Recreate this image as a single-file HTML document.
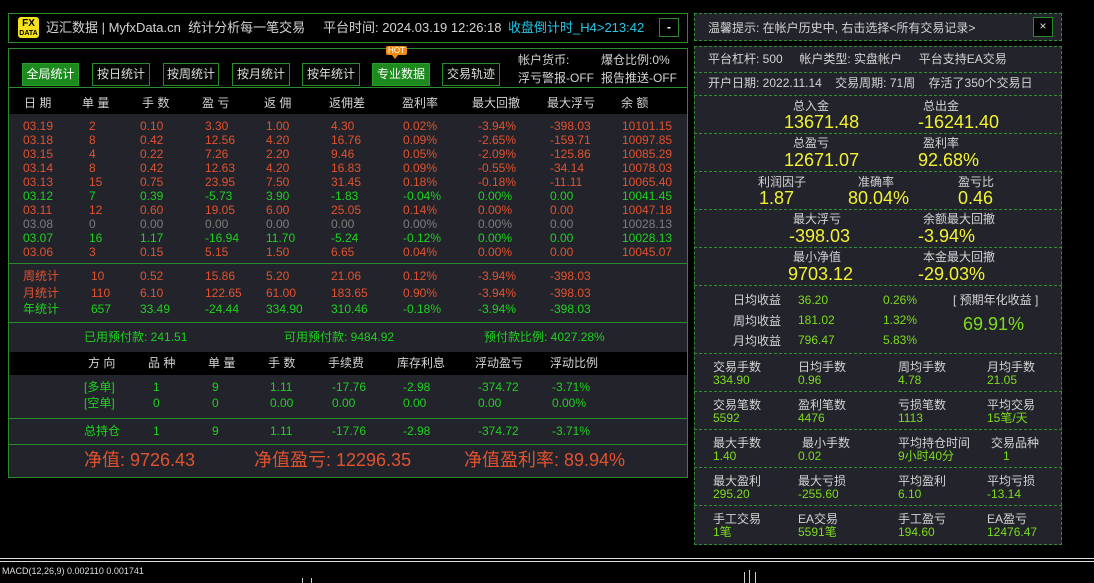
<!DOCTYPE html>
<html><head><meta charset="utf-8"><style>
*{margin:0;padding:0;box-sizing:border-box}
body{width:1094px;height:583px;background:#000;position:relative;overflow:hidden;font-family:"Liberation Sans","Noto Sans CJK SC",sans-serif;font-size:12px;color:#ccc}
.t{position:absolute;white-space:nowrap;line-height:16px}
.b{position:absolute}
.r{color:#e2522e}.g{color:#1fd21f}.gy{color:#7d7d7d}.y{color:#f2f232}.l{color:#7ddc1c}.w{color:#d4d4d4}
.btn{position:absolute;top:63px;height:23px;border:1px solid #2c8a2c;color:#ddd;font-size:12px;line-height:21px;text-align:center;background:#050805}
.btn.on{background:#1d8a1d;color:#fff;border-color:#2aa02a}
.hl{position:absolute;left:8px;width:680px;height:1px;background:#2c8a2c}
.dl{position:absolute;left:694px;width:368px;border-top:1px dashed #2f8f2f}
.big{font-size:18px;line-height:20px}
</style></head><body>
<div class="b" style="left:8px;top:13px;width:680px;height:30px;border:1px solid #2c8a2c;background:#000"></div>
<div class="b" style="left:18px;top:17px;width:21px;height:21px;background:#f5e21a;border-radius:3px;color:#000;font-weight:bold;text-align:center;font-size:10px;line-height:9px;padding-top:2px">FX<br><span style="font-size:7px">DATA</span></div>
<div class="t w" style="left:46px;top:20px;font-size:13px">迈汇数据 | MyfxData.cn&nbsp; 统计分析每一笔交易</div>
<div class="t w" style="left:323px;top:20px;font-size:13px">平台时间: 2024.03.19 12:26:18</div>
<div class="t" style="left:508px;top:20px;font-size:13px;color:#22c8e8">收盘倒计时_H4&gt;213:42</div>
<div class="b" style="left:659px;top:18px;width:20px;height:19px;border:1px solid #2c8a2c;color:#fff;text-align:center;line-height:16px;font-weight:bold">-</div>

<div class="b" style="left:8px;top:48px;width:680px;height:430px;border:1px solid #2c8a2c;background:#000"></div>
<div class="b" style="left:9px;top:93px;width:678px;height:21px;background:#000"></div>
<div class="b" style="left:9px;top:114px;width:678px;height:238px;background:#22232b"></div>
<div class="b" style="left:9px;top:375px;width:678px;height:102px;background:#22232b"></div>
<div class="hl" style="top:87px"></div>
<div class="hl" style="top:263px"></div>
<div class="hl" style="top:322px"></div>
<div class="hl" style="top:418px"></div>
<div class="hl" style="top:444px"></div>

<div class="btn on" style="left:22px;width:57px">全局统计</div>
<div class="btn" style="left:92px;width:58px">按日统计</div>
<div class="btn" style="left:163px;width:56px">按周统计</div>
<div class="btn" style="left:232px;width:58px">按月统计</div>
<div class="btn" style="left:302px;width:58px">按年统计</div>
<div class="btn on" style="left:372px;width:58px">专业数据</div>
<div class="btn" style="left:442px;width:58px">交易轨迹</div>
<div class="b" style="left:386px;top:46px;width:21px;height:9px;background:#f08a10;color:#fff;font-size:8px;line-height:9px;text-align:center;border-radius:2px">HOT</div>
<div class="b" style="left:392px;top:55px;width:0;height:0;border-left:3px solid transparent;border-right:3px solid transparent;border-top:4px solid #f08a10"></div>
<div class="t w" style="left:518px;top:52px">帐户货币:</div>
<div class="t w" style="left:601px;top:52px">爆仓比例:0%</div>
<div class="t w" style="left:518px;top:70px">浮亏警报-OFF</div>
<div class="t w" style="left:601px;top:70px">报告推送-OFF</div>

<div class="t w" style="left:24px;top:95px">日 期</div><div class="t w" style="left:82px;top:95px">单 量</div><div class="t w" style="left:142px;top:95px">手 数</div><div class="t w" style="left:202px;top:95px">盈 亏</div><div class="t w" style="left:264px;top:95px">返 佣</div><div class="t w" style="left:329px;top:95px">返佣差</div><div class="t w" style="left:402px;top:95px">盈利率</div><div class="t w" style="left:472px;top:95px">最大回撤</div><div class="t w" style="left:547px;top:95px">最大浮亏</div><div class="t w" style="left:621px;top:95px">余 额</div>

<div class="t r" style="left:23px;top:118px">03.19</div><div class="t r" style="left:89px;top:118px">2</div><div class="t r" style="left:140px;top:118px">0.10</div><div class="t r" style="left:205px;top:118px">3.30</div><div class="t r" style="left:266px;top:118px">1.00</div><div class="t r" style="left:331px;top:118px">4.30</div><div class="t r" style="left:403px;top:118px">0.02%</div><div class="t r" style="left:478px;top:118px">-3.94%</div><div class="t r" style="left:550px;top:118px">-398.03</div><div class="t r" style="left:622px;top:118px">10101.15</div>
<div class="t r" style="left:23px;top:132px">03.18</div><div class="t r" style="left:89px;top:132px">8</div><div class="t r" style="left:140px;top:132px">0.42</div><div class="t r" style="left:205px;top:132px">12.56</div><div class="t r" style="left:266px;top:132px">4.20</div><div class="t r" style="left:331px;top:132px">16.76</div><div class="t r" style="left:403px;top:132px">0.09%</div><div class="t r" style="left:478px;top:132px">-2.65%</div><div class="t r" style="left:550px;top:132px">-159.71</div><div class="t r" style="left:622px;top:132px">10097.85</div>
<div class="t r" style="left:23px;top:146px">03.15</div><div class="t r" style="left:89px;top:146px">4</div><div class="t r" style="left:140px;top:146px">0.22</div><div class="t r" style="left:205px;top:146px">7.26</div><div class="t r" style="left:266px;top:146px">2.20</div><div class="t r" style="left:331px;top:146px">9.46</div><div class="t r" style="left:403px;top:146px">0.05%</div><div class="t r" style="left:478px;top:146px">-2.09%</div><div class="t r" style="left:550px;top:146px">-125.86</div><div class="t r" style="left:622px;top:146px">10085.29</div>
<div class="t r" style="left:23px;top:160px">03.14</div><div class="t r" style="left:89px;top:160px">8</div><div class="t r" style="left:140px;top:160px">0.42</div><div class="t r" style="left:205px;top:160px">12.63</div><div class="t r" style="left:266px;top:160px">4.20</div><div class="t r" style="left:331px;top:160px">16.83</div><div class="t r" style="left:403px;top:160px">0.09%</div><div class="t r" style="left:478px;top:160px">-0.55%</div><div class="t r" style="left:550px;top:160px">-34.14</div><div class="t r" style="left:622px;top:160px">10078.03</div>
<div class="t r" style="left:23px;top:174px">03.13</div><div class="t r" style="left:89px;top:174px">15</div><div class="t r" style="left:140px;top:174px">0.75</div><div class="t r" style="left:205px;top:174px">23.95</div><div class="t r" style="left:266px;top:174px">7.50</div><div class="t r" style="left:331px;top:174px">31.45</div><div class="t r" style="left:403px;top:174px">0.18%</div><div class="t r" style="left:478px;top:174px">-0.18%</div><div class="t r" style="left:550px;top:174px">-11.11</div><div class="t r" style="left:622px;top:174px">10065.40</div>
<div class="t g" style="left:23px;top:188px">03.12</div><div class="t g" style="left:89px;top:188px">7</div><div class="t g" style="left:140px;top:188px">0.39</div><div class="t g" style="left:205px;top:188px">-5.73</div><div class="t g" style="left:266px;top:188px">3.90</div><div class="t g" style="left:331px;top:188px">-1.83</div><div class="t g" style="left:403px;top:188px">-0.04%</div><div class="t g" style="left:478px;top:188px">0.00%</div><div class="t g" style="left:550px;top:188px">0.00</div><div class="t g" style="left:622px;top:188px">10041.45</div>
<div class="t r" style="left:23px;top:202px">03.11</div><div class="t r" style="left:89px;top:202px">12</div><div class="t r" style="left:140px;top:202px">0.60</div><div class="t r" style="left:205px;top:202px">19.05</div><div class="t r" style="left:266px;top:202px">6.00</div><div class="t r" style="left:331px;top:202px">25.05</div><div class="t r" style="left:403px;top:202px">0.14%</div><div class="t r" style="left:478px;top:202px">0.00%</div><div class="t r" style="left:550px;top:202px">0.00</div><div class="t r" style="left:622px;top:202px">10047.18</div>
<div class="t gy" style="left:23px;top:216px">03.08</div><div class="t gy" style="left:89px;top:216px">0</div><div class="t gy" style="left:140px;top:216px">0.00</div><div class="t gy" style="left:205px;top:216px">0.00</div><div class="t gy" style="left:266px;top:216px">0.00</div><div class="t gy" style="left:331px;top:216px">0.00</div><div class="t gy" style="left:403px;top:216px">0.00%</div><div class="t gy" style="left:478px;top:216px">0.00%</div><div class="t gy" style="left:550px;top:216px">0.00</div><div class="t gy" style="left:622px;top:216px">10028.13</div>
<div class="t g" style="left:23px;top:230px">03.07</div><div class="t g" style="left:89px;top:230px">16</div><div class="t g" style="left:140px;top:230px">1.17</div><div class="t g" style="left:205px;top:230px">-16.94</div><div class="t g" style="left:266px;top:230px">11.70</div><div class="t g" style="left:331px;top:230px">-5.24</div><div class="t g" style="left:403px;top:230px">-0.12%</div><div class="t g" style="left:478px;top:230px">0.00%</div><div class="t g" style="left:550px;top:230px">0.00</div><div class="t g" style="left:622px;top:230px">10028.13</div>
<div class="t r" style="left:23px;top:244px">03.06</div><div class="t r" style="left:89px;top:244px">3</div><div class="t r" style="left:140px;top:244px">0.15</div><div class="t r" style="left:205px;top:244px">5.15</div><div class="t r" style="left:266px;top:244px">1.50</div><div class="t r" style="left:331px;top:244px">6.65</div><div class="t r" style="left:403px;top:244px">0.04%</div><div class="t r" style="left:478px;top:244px">0.00%</div><div class="t r" style="left:550px;top:244px">0.00</div><div class="t r" style="left:622px;top:244px">10045.07</div>

<div class="t r" style="left:23px;top:268px">周统计</div><div class="t r" style="left:91px;top:268px">10</div><div class="t r" style="left:140px;top:268px">0.52</div><div class="t r" style="left:205px;top:268px">15.86</div><div class="t r" style="left:266px;top:268px">5.20</div><div class="t r" style="left:331px;top:268px">21.06</div><div class="t r" style="left:403px;top:268px">0.12%</div><div class="t r" style="left:478px;top:268px">-3.94%</div><div class="t r" style="left:550px;top:268px">-398.03</div>
<div class="t r" style="left:23px;top:285px">月统计</div><div class="t r" style="left:91px;top:285px">110</div><div class="t r" style="left:140px;top:285px">6.10</div><div class="t r" style="left:205px;top:285px">122.65</div><div class="t r" style="left:266px;top:285px">61.00</div><div class="t r" style="left:331px;top:285px">183.65</div><div class="t r" style="left:403px;top:285px">0.90%</div><div class="t r" style="left:478px;top:285px">-3.94%</div><div class="t r" style="left:550px;top:285px">-398.03</div>
<div class="t g" style="left:23px;top:301px">年统计</div><div class="t g" style="left:91px;top:301px">657</div><div class="t g" style="left:140px;top:301px">33.49</div><div class="t g" style="left:205px;top:301px">-24.44</div><div class="t g" style="left:266px;top:301px">334.90</div><div class="t g" style="left:331px;top:301px">310.46</div><div class="t g" style="left:403px;top:301px">-0.18%</div><div class="t g" style="left:478px;top:301px">-3.94%</div><div class="t g" style="left:550px;top:301px">-398.03</div>

<div class="t g" style="left:84px;top:329px">已用预付款: 241.51</div>
<div class="t g" style="left:284px;top:329px">可用预付款: 9484.92</div>
<div class="t g" style="left:484px;top:329px">预付款比例: 4027.28%</div>

<div class="t w" style="left:88px;top:355px">方 向</div><div class="t w" style="left:148px;top:355px">品 种</div><div class="t w" style="left:208px;top:355px">单 量</div><div class="t w" style="left:268px;top:355px">手 数</div><div class="t w" style="left:328px;top:355px">手续费</div><div class="t w" style="left:397px;top:355px">库存利息</div><div class="t w" style="left:475px;top:355px">浮动盈亏</div><div class="t w" style="left:550px;top:355px">浮动比例</div>

<div class="t g" style="left:84px;top:379px">[多单]</div><div class="t g" style="left:153px;top:379px">1</div><div class="t g" style="left:212px;top:379px">9</div><div class="t g" style="left:270px;top:379px">1.11</div><div class="t g" style="left:332px;top:379px">-17.76</div><div class="t g" style="left:403px;top:379px">-2.98</div><div class="t g" style="left:478px;top:379px">-374.72</div><div class="t g" style="left:552px;top:379px">-3.71%</div>
<div class="t g" style="left:84px;top:395px">[空单]</div><div class="t g" style="left:153px;top:395px">0</div><div class="t g" style="left:212px;top:395px">0</div><div class="t g" style="left:270px;top:395px">0.00</div><div class="t g" style="left:332px;top:395px">0.00</div><div class="t g" style="left:403px;top:395px">0.00</div><div class="t g" style="left:478px;top:395px">0.00</div><div class="t g" style="left:552px;top:395px">0.00%</div>
<div class="t g" style="left:84px;top:423px">总持仓</div><div class="t g" style="left:153px;top:423px">1</div><div class="t g" style="left:212px;top:423px">9</div><div class="t g" style="left:270px;top:423px">1.11</div><div class="t g" style="left:332px;top:423px">-17.76</div><div class="t g" style="left:403px;top:423px">-2.98</div><div class="t g" style="left:478px;top:423px">-374.72</div><div class="t g" style="left:552px;top:423px">-3.71%</div>

<div class="t r" style="left:84px;top:449px;font-size:18px;line-height:22px">净值: 9726.43</div>
<div class="t r" style="left:254px;top:449px;font-size:18px;line-height:22px">净值盈亏: 12296.35</div>
<div class="t r" style="left:464px;top:449px;font-size:18px;line-height:22px">净值盈利率: 89.94%</div>

<div class="b" style="left:694px;top:13px;width:368px;height:28px;border:1px dashed #2f8f2f;background:#22232b"></div>
<div class="t w" style="left:708px;top:20px">温馨提示: 在帐户历史中, 右击选择&lt;所有交易记录&gt;</div>
<div class="b" style="left:1033px;top:17px;width:20px;height:20px;border:1px solid #2c8a2c;background:#000;color:#ddd;text-align:center;line-height:17px;font-size:12px">×</div>
<div class="b" style="left:694px;top:46px;width:368px;height:499px;border:1px dashed #2f8f2f;background:#22232b"></div>
<div class="dl" style="top:72px"></div><div class="dl" style="top:95px"></div><div class="dl" style="top:133px"></div><div class="dl" style="top:171px"></div><div class="dl" style="top:209px"></div><div class="dl" style="top:247px"></div><div class="dl" style="top:285px"></div><div class="dl" style="top:353px"></div><div class="dl" style="top:391px"></div><div class="dl" style="top:429px"></div><div class="dl" style="top:467px"></div><div class="dl" style="top:505px"></div>

<div class="t w" style="left:708px;top:51px">平台杠杆: 500&nbsp;&nbsp;&nbsp;&nbsp; 帐户类型: 实盘帐户&nbsp;&nbsp;&nbsp;&nbsp; 平台支持EA交易</div>
<div class="t w" style="left:708px;top:75px">开户日期: 2022.11.14&nbsp;&nbsp;&nbsp; 交易周期: 71周&nbsp;&nbsp;&nbsp; 存活了350个交易日</div>

<div class="t w" style="left:793px;top:98px">总入金</div><div class="t w" style="left:923px;top:98px">总出金</div>
<div class="t y big" style="left:784px;top:112px">13671.48</div><div class="t y big" style="left:918px;top:112px">-16241.40</div>
<div class="t w" style="left:793px;top:135px">总盈亏</div><div class="t w" style="left:923px;top:135px">盈利率</div>
<div class="t y big" style="left:784px;top:150px">12671.07</div><div class="t y big" style="left:918px;top:150px">92.68%</div>
<div class="t w" style="left:758px;top:174px">利润因子</div><div class="t w" style="left:858px;top:174px">准确率</div><div class="t w" style="left:958px;top:174px">盈亏比</div>
<div class="t y big" style="left:759px;top:188px">1.87</div><div class="t y big" style="left:848px;top:188px">80.04%</div><div class="t y big" style="left:958px;top:188px">0.46</div>
<div class="t w" style="left:793px;top:211px">最大浮亏</div><div class="t w" style="left:923px;top:211px">余额最大回撤</div>
<div class="t y big" style="left:789px;top:226px">-398.03</div><div class="t y big" style="left:918px;top:226px">-3.94%</div>
<div class="t w" style="left:793px;top:249px">最小净值</div><div class="t w" style="left:923px;top:249px">本金最大回撤</div>
<div class="t y big" style="left:788px;top:264px">9703.12</div><div class="t y big" style="left:918px;top:264px">-29.03%</div>

<div class="t w" style="left:733px;top:292px">日均收益</div><div class="t l" style="left:798px;top:292px">36.20</div><div class="t l" style="left:883px;top:292px">0.26%</div>
<div class="t w" style="left:733px;top:313px">周均收益</div><div class="t l" style="left:798px;top:312px">181.02</div><div class="t l" style="left:883px;top:312px">1.32%</div>
<div class="t w" style="left:733px;top:333px">月均收益</div><div class="t l" style="left:798px;top:332px">796.47</div><div class="t l" style="left:883px;top:332px">5.83%</div>
<div class="t w" style="left:953px;top:292px">[ 预期年化收益 ]</div>
<div class="t l big" style="left:963px;top:314px">69.91%</div>

<div class="t w" style="left:713px;top:359px">交易手数</div><div class="t w" style="left:798px;top:359px">日均手数</div><div class="t w" style="left:898px;top:359px">周均手数</div><div class="t w" style="left:987px;top:359px">月均手数</div>
<div class="t l" style="left:713px;top:372px">334.90</div><div class="t l" style="left:798px;top:372px">0.96</div><div class="t l" style="left:898px;top:372px">4.78</div><div class="t l" style="left:987px;top:372px">21.05</div>
<div class="t w" style="left:713px;top:397px">交易笔数</div><div class="t w" style="left:798px;top:397px">盈利笔数</div><div class="t w" style="left:898px;top:397px">亏损笔数</div><div class="t w" style="left:987px;top:397px">平均交易</div>
<div class="t l" style="left:713px;top:410px">5592</div><div class="t l" style="left:798px;top:410px">4476</div><div class="t l" style="left:898px;top:410px">1113</div><div class="t l" style="left:987px;top:410px">15笔/天</div>
<div class="t w" style="left:713px;top:435px">最大手数</div><div class="t w" style="left:802px;top:435px">最小手数</div><div class="t w" style="left:898px;top:435px">平均持仓时间</div><div class="t w" style="left:991px;top:435px">交易品种</div>
<div class="t l" style="left:713px;top:448px">1.40</div><div class="t l" style="left:798px;top:448px">0.02</div><div class="t l" style="left:898px;top:448px">9小时40分</div><div class="t l" style="left:1003px;top:448px">1</div>
<div class="t w" style="left:713px;top:473px">最大盈利</div><div class="t w" style="left:798px;top:473px">最大亏损</div><div class="t w" style="left:898px;top:473px">平均盈利</div><div class="t w" style="left:987px;top:473px">平均亏损</div>
<div class="t l" style="left:713px;top:486px">295.20</div><div class="t l" style="left:798px;top:486px">-255.60</div><div class="t l" style="left:898px;top:486px">6.10</div><div class="t l" style="left:987px;top:486px">-13.14</div>
<div class="t w" style="left:713px;top:511px">手工交易</div><div class="t w" style="left:798px;top:511px">EA交易</div><div class="t w" style="left:898px;top:511px">手工盈亏</div><div class="t w" style="left:987px;top:511px">EA盈亏</div>
<div class="t l" style="left:713px;top:524px">1笔</div><div class="t l" style="left:798px;top:524px">5591笔</div><div class="t l" style="left:898px;top:524px">194.60</div><div class="t l" style="left:987px;top:524px">12476.47</div>

<div class="b" style="left:0;top:558px;width:1094px;height:1px;background:#ddd"></div>
<div class="b" style="left:0;top:561px;width:1094px;height:1px;background:#ddd"></div>
<div class="t" style="left:2px;top:563px;font-size:9px;color:#ddd">MACD(12,26,9) 0.002110 0.001741</div>
<div class="b" style="left:302px;top:578px;width:10px;height:5px;border-left:1px solid #ccc;border-right:1px solid #ccc"></div>
<div class="b" style="left:744px;top:572px;width:12px;height:11px;border-left:1px solid #ccc;border-right:1px solid #ccc"></div>
<div class="b" style="left:749px;top:570px;width:1px;height:13px;background:#ccc"></div>
</body></html>
